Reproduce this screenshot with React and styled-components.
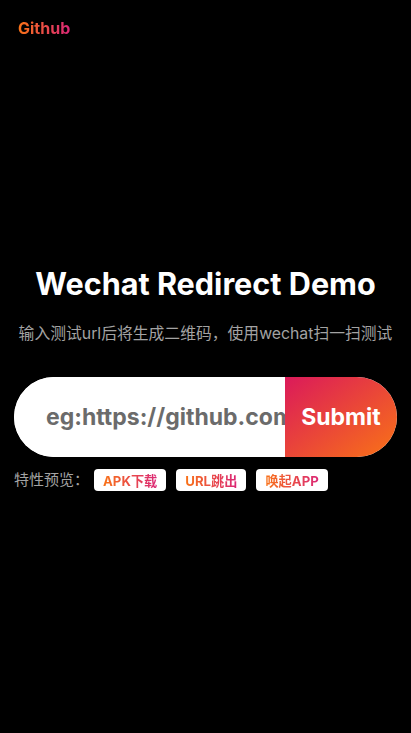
import React from "react";
import styled, { createGlobalStyle } from "styled-components";

const GlobalStyle = createGlobalStyle`
  html, body {
    margin: 0;
    padding: 0;
    background: #000;
  }
  body {
    font-family: Inter, "Noto Sans CJK SC", sans-serif;
  }
`;

const Page = styled.div`
  min-height: 100vh;
  background: #000;
  color: #fff;
  display: flex;
  flex-direction: column;
`;

const Header = styled.header`
  height: 56px;
  display: flex;
  align-items: center;
  padding: 0 18px;
`;

const GradientText = styled.span`
  background: linear-gradient(to right, #f97316, #db2777);
  -webkit-background-clip: text;
  background-clip: text;
  color: transparent;
  font-weight: 700;
`;

const Logo = styled(GradientText)`
  font-size: 16px;
`;

const Main = styled.main`
  display: flex;
  flex-direction: column;
  align-items: center;
  padding: 208px 14px 0;
`;

const Title = styled.h1`
  margin: 0;
  font-size: 30.6px;
  font-weight: 700;
  line-height: 40px;
  text-align: center;
`;

const Subtitle = styled.p`
  margin: 19px 0 0;
  font-size: 15.8px;
  line-height: 22px;
  color: #a3a3a3;
  text-align: center;
  white-space: nowrap;
`;

const Form = styled.form`
  margin-top: 32px;
  width: 100%;
  height: 80px;
  display: flex;
  border-radius: 40px;
  overflow: hidden;
  background: #fff;
`;

const Input = styled.input`
  flex: 1;
  min-width: 0;
  border: none;
  outline: none;
  padding: 0 0 0 32px;
  font-family: Inter, sans-serif;
  font-size: 23px;
  font-weight: 700;
  background: #fff;
  &::placeholder {
    color: #6b6b6b;
  }
`;

const SubmitButton = styled.button`
  width: 112px;
  border: none;
  font-family: Inter, sans-serif;
  font-size: 23px;
  font-weight: 700;
  color: #fff;
  padding: 0;
  background: linear-gradient(to bottom right, #db1a5a, #f97316);
  cursor: pointer;
`;

const Features = styled.div`
  align-self: stretch;
  margin-top: 12px;
  display: flex;
  align-items: center;
  gap: 10px;
`;

const Label = styled.span`
  font-size: 15px;
  color: #a3a3a3;
  margin-right: -5px;
  margin-top: -3px;
`;

const Tag = styled.span`
  background: #fff;
  border-radius: 4px;
  height: 22px;
  padding: 0 9px;
  display: flex;
  align-items: center;
  font-size: 13.2px;
`;

export default function App() {
  return (
    <Page>
      <GlobalStyle />
      <Header>
        <Logo>Github</Logo>
      </Header>
      <Main>
        <Title>Wechat Redirect Demo</Title>
        <Subtitle>输入测试url后将生成二维码，使用wechat扫一扫测试</Subtitle>
        <Form onSubmit={(e) => e.preventDefault()}>
          <Input placeholder="eg:https://github.com" />
          <SubmitButton type="submit">Submit</SubmitButton>
        </Form>
        <Features>
          <Label>特性预览：</Label>
          <Tag><GradientText>APK下载</GradientText></Tag>
          <Tag><GradientText>URL跳出</GradientText></Tag>
          <Tag><GradientText>唤起APP</GradientText></Tag>
        </Features>
      </Main>
    </Page>
  );
}
